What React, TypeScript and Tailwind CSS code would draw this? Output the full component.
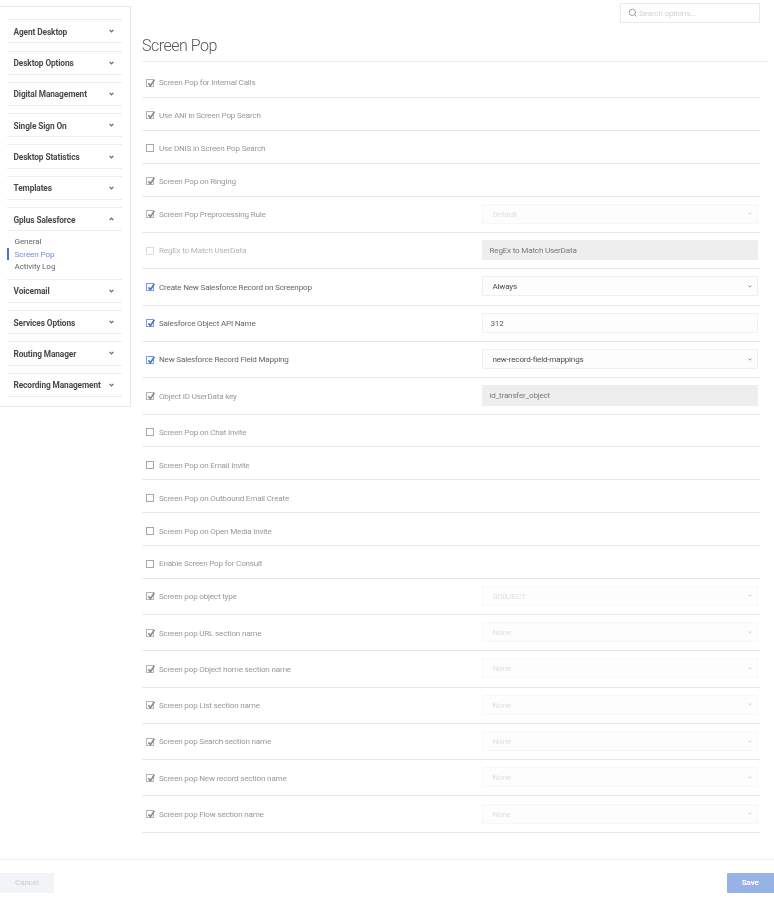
import { Search } from "lucide-react";
import React from "react";

type Control =
  | { kind: "select"; value: string; active?: boolean }
  | { kind: "input"; value: string; disabled?: boolean };

type Row = {
  label: string;
  checked: boolean;
  tone?: "active" | "normal" | "faint";
  control?: Control;
};

const sections = [
  "Agent Desktop",
  "Desktop Options",
  "Digital Management",
  "Single Sign On",
  "Desktop Statistics",
  "Templates",
  "Gplus Salesforce",
  "Voicemail",
  "Services Options",
  "Routing Manager",
  "Recording Management",
];

const rows: Row[] = [
  { label: "Screen Pop for Internal Calls", checked: true },
  { label: "Use ANI in Screen Pop Search", checked: true },
  { label: "Use DNIS in Screen Pop Search", checked: false },
  { label: "Screen Pop on Ringing", checked: true },
  { label: "Screen Pop Preprocessing Rule", checked: true, control: { kind: "select", value: "Default" } },
  { label: "RegEx to Match UserData", checked: false, tone: "faint", control: { kind: "input", value: "RegEx to Match UserData", disabled: true } },
  { label: "Create New Salesforce Record on Screenpop", checked: true, tone: "active", control: { kind: "select", value: "Always", active: true } },
  { label: "Salesforce Object API Name", checked: true, tone: "active", control: { kind: "input", value: "312" } },
  { label: "New Salesforce Record Field Mapping", checked: true, tone: "active", control: { kind: "select", value: "new-record-field-mappings", active: true } },
  { label: "Object ID UserData key", checked: true, control: { kind: "input", value: "id_transfer_object", disabled: true } },
  { label: "Screen Pop on Chat Invite", checked: false },
  { label: "Screen Pop on Email Invite", checked: false },
  { label: "Screen Pop on Outbound Email Create", checked: false },
  { label: "Screen Pop on Open Media Invite", checked: false },
  { label: "Enable Screen Pop for Consult", checked: false },
  { label: "Screen pop object type", checked: true, control: { kind: "select", value: "SOBJECT" } },
  { label: "Screen pop URL section name", checked: true, control: { kind: "select", value: "None" } },
  { label: "Screen pop Object home section name", checked: true, control: { kind: "select", value: "None" } },
  { label: "Screen pop List section name", checked: true, control: { kind: "select", value: "None" } },
  { label: "Screen pop Search section name", checked: true, control: { kind: "select", value: "None" } },
  { label: "Screen pop New record section name", checked: true, control: { kind: "select", value: "None" } },
  { label: "Screen pop Flow section name", checked: true, control: { kind: "select", value: "None" } },
];

const Chevron: React.FC<{ up?: boolean; className?: string }> = ({ up, className }) => (
  <svg viewBox="0 0 6 4" className={className} fill="none" stroke="currentColor" strokeWidth="1.5">
    <polyline points={up ? "0.8,3.4 3,1 5.2,3.4" : "0.8,0.6 3,3 5.2,0.6"} />
  </svg>
);

const Checkbox: React.FC<{ checked: boolean; tone?: Row["tone"] }> = ({ checked, tone }) => {
  const box =
    tone === "active" ? "border-[#7d9be4]" : tone === "faint" ? "border-[#dcdcdc]" : checked ? "border-[#b5b5b5]" : "border-[#a8a8a8]";
  const tick = tone === "active" ? "#4a72d6" : "#8a8a8a";
  return (
    <span className={`relative block w-2 h-2 shrink-0 border bg-white ${box}`}>
      {checked && (
        <svg viewBox="0 0 10 10" className="absolute left-[-1px] top-[-2px] w-[10px] h-[10px]" fill="none" stroke={tick} strokeWidth="1.6">
          <polyline points="2.4,5.4 4.4,7.6 8.4,1.8" />
        </svg>
      )}
    </span>
  );
};

const RowControl: React.FC<{ control: Control }> = ({ control }) => {
  if (control.kind === "input") {
    return control.disabled ? (
      <div className="w-[276px] h-[20.5px] pl-2 flex items-center rounded-[1px] bg-[#eeeeee] text-[8.1px] tracking-[-0.2px] text-[#77797c]">
        {control.value}
      </div>
    ) : (
      <div className="w-[276px] h-[20px] pl-2 flex items-center rounded-[1px] border border-[#eff0f2] bg-[#fdfdfd] text-[8.1px] tracking-[-0.2px] text-[#55585c]">
        {control.value}
      </div>
    );
  }
  return control.active ? (
    <div className="w-[276px] h-[20px] pl-[10px] pr-[5px] flex items-center justify-between rounded-[1px] border border-[#eff0f2] bg-[#fdfdfd] text-[8.1px] tracking-[-0.2px] text-[#4a4d52]">
      {control.value}
      <Chevron className="w-[4px] h-[3px] text-[#7d9be4]" />
    </div>
  ) : (
    <div className="w-[276px] h-[20px] pl-[10px] pr-[5px] flex items-center justify-between rounded-[1px] border border-[#f6f7f8] bg-[#fdfdfd] text-[8.1px] tracking-[-0.2px] text-[#dde0e6]">
      {control.value}
      <Chevron className="w-[4px] h-[3px] text-[#c6d2ee]" />
    </div>
  );
};

export default function App() {
  return (
    <div className="w-[774px] h-[900px] flex flex-col overflow-hidden bg-white font-['Roboto',sans-serif] blur-[0.3px]">
      <div className="h-[859px] flex items-start">
        {/* Sidebar */}
        <aside className="w-[131px] h-[401px] mt-[6px] pt-[12.3px] pl-[7px] pr-[8px] shrink-0 border-t border-r border-b border-[#e9e9e9]">
          {sections.map((name) => {
            const open = name === "Gplus Salesforce";
            return (
              <div key={name} className={open ? "" : "mb-[7.1px]"}>
                <div className="h-[24.2px] pl-[6.5px] pr-[8px] flex items-center justify-between border-y border-[#ececec] text-[8.3px] tracking-[-0.1px] font-bold text-[#46494d] whitespace-nowrap">
                  <span className="pt-[1.5px]">{name}</span>
                  <Chevron up={open} className="w-[5px] h-[4px] text-[#66696d]" />
                </div>
                {open && (
                  <ul className="h-[47.6px] pt-[4px] text-[8.1px] tracking-[-0.1px] leading-[12.6px] text-[#63666a]">
                    <li className="pl-[7.5px]">General</li>
                    <li className="pl-[5.5px] border-l-2 border-[#4a72d6] text-[#6f8fe0]">Screen Pop</li>
                    <li className="pl-[7.5px]">Activity Log</li>
                  </ul>
                )}
              </div>
            );
          })}
        </aside>

        {/* Main column */}
        <main className="w-[626px] ml-[11px]">
          <div className="h-[22px] pt-[3px] flex justify-end pr-[8px]">
            <div className="w-[140px] h-[20px] pl-[6.5px] flex items-center gap-[2px] border border-[#e9ebef] text-[8.1px] tracking-[-0.2px] text-[#ced2d8]">
              <Search className="w-[9.5px] h-[9.5px] text-[#8b9096]" strokeWidth={2.2} />
              Search options...
            </div>
          </div>
          <h1 className="h-[39.5px] pt-[14px] border-b border-[#ececec] text-[16px] tracking-[-0.5px] leading-[20px] font-light text-[#55585c]">
            Screen Pop
          </h1>
          <div className="w-[618px]">
            {rows.map((row, i) => {
              const color =
                row.tone === "active" ? "text-[#63666b]" : row.tone === "faint" ? "text-[#b4b5b7]" : "text-[#97999b]";
              const size = !row.control
                ? i === 0
                  ? "h-[36px] pt-[7px]"
                  : i < 10
                    ? "h-[33px] pt-[3.5px]"
                    : "h-[32.8px] pt-[3.5px]"
                : row.control.kind === "input" && row.control.disabled
                  ? "h-[36.5px]"
                  : "h-[36.3px]";
              return (
                <div key={row.label} className={`flex items-center pl-[4px] border-b border-[#e8e8e8] ${size}`}>
                  <Checkbox checked={row.checked} tone={row.tone} />
                  <span className={`ml-[5px] text-[8.1px] tracking-[-0.2px] whitespace-nowrap ${color}`}>{row.label}</span>
                  {row.control && (
                    <div className="ml-auto mr-[2.5px] pb-[1px]">
                      <RowControl control={row.control} />
                    </div>
                  )}
                </div>
              );
            })}
          </div>
        </main>
      </div>

      {/* Footer */}
      <footer className="h-[41px] pt-[12.5px] flex justify-between border-t border-[#eef0f3]">
        <button className="w-[54px] h-[20px] rounded-r-[1px] bg-[#f2f4f7] text-[8px] tracking-[-0.1px] font-medium text-[#ced2d9]">Cancel</button>
        <button className="w-[47.5px] h-[20px] rounded-l-[1px] bg-[#98b2e6] text-[8px] tracking-[-0.1px] font-bold text-white">Save</button>
      </footer>
    </div>
  );
}
